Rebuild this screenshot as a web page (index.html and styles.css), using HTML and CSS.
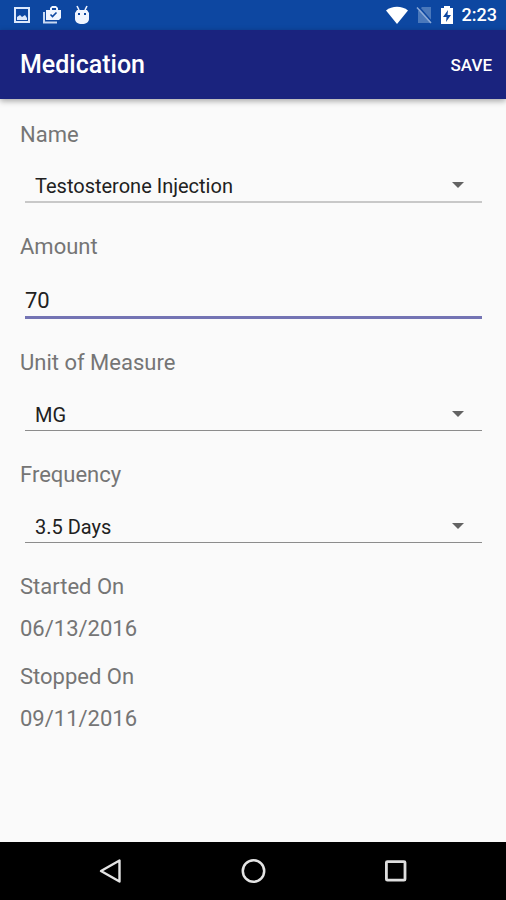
FILE: index.html
```html
<!DOCTYPE html>
<html lang="en">
<head>
<meta charset="utf-8">
<meta name="viewport" content="width=device-width, initial-scale=1">
<title>Medication</title>
<link rel="stylesheet" href="styles.css">
</head>
<body>
<div class="status">
  <div class="status-group status-left">
    <svg width="18" height="18" viewBox="0 0 18 18" aria-hidden="true"><path fill="#dce8fb" fill-rule="evenodd" d="M1 1h16v16H1zM3 3v12h12V3z"/><path fill="#dce8fb" d="M4 14v-3l3-2 2 2 3-2 2 3v2z"/></svg>
    <svg width="20" height="18" viewBox="0 0 20 18" aria-hidden="true"><path fill="none" stroke="#c7d8f2" stroke-width="2" d="M2 6v10.500h13"/><path fill="#f0f5ff" fill-rule="evenodd" d="M4 4h4V2l2-2h4l2 2v2h3v8l-2 2H4zM10 2v2h4V2z"/><path fill="none" stroke="#0d47a1" stroke-width="1.600" d="M8.500 8.500l2 2 4-4"/></svg>
    <svg width="18" height="20" viewBox="0 0 18 20" aria-hidden="true"><path fill="none" stroke="#f0f5ff" stroke-width="1.600" d="M4 1l2 4M14 1l-2 4"/><path fill="#f0f5ff" fill-rule="evenodd" d="M2 8l2-3h10l2 3v6c0 3-3 5-7 5s-7-2-7-5zM5 8v2h2V8zM11 8v2h2V8z"/></svg>
  </div>
  <div class="status-group status-right">
    <svg width="22" height="18" viewBox="0 0 22 18" aria-hidden="true"><path fill="#fff" d="M0 4.500C6-.5 16-.5 22 4.500L11 18z"/></svg>
    <svg width="16" height="18" viewBox="0 0 16 18" aria-hidden="true"><path fill="#4a78bb" d="M6 1h9v16H2V5z"/><path stroke="#0d47a1" stroke-width="1.500" d="M3 1l13 15"/><path stroke="#8eabd8" stroke-width="1.500" d="M1 1.500l14 15.500"/></svg>
    <svg width="14" height="18" viewBox="0 0 14 18" aria-hidden="true"><path fill="#fff" d="M4 0h6v2h3v16H1V2h3z"/><path fill="#0d47a1" d="M8 4l-5 7h3.500L6 16l5-7H7.500z"/></svg>
    <span class="clock">2:23</span>
  </div>
</div>
<header class="toolbar">
  <h1 class="title">Medication</h1>
  <button class="save" type="button">SAVE</button>
</header>
<main class="form">
  <div class="field">
    <label class="label" for="name">Name</label>
    <div class="control control-soft">
      <select class="select" id="name"><option>Testosterone Injection</option></select>
    </div>
  </div>
  <div class="field">
    <label class="label" for="amount">Amount</label>
    <input class="input" id="amount" type="text" inputmode="decimal" value="70">
  </div>
  <div class="field">
    <label class="label" for="unit">Unit of Measure</label>
    <div class="control">
      <select class="select" id="unit"><option>MG</option></select>
    </div>
  </div>
  <div class="field">
    <label class="label" for="frequency">Frequency</label>
    <div class="control">
      <select class="select" id="frequency"><option>3.5 Days</option></select>
    </div>
  </div>
  <dl class="dates">
    <div class="date"><dt>Started On</dt><dd>06/13/2016</dd></div>
    <div class="date"><dt>Stopped On</dt><dd>09/11/2016</dd></div>
  </dl>
</main>
<nav class="navbar">
  <button class="nav-button" type="button" aria-label="Back"><svg width="26" height="26" viewBox="0 0 26 26"><path fill="none" stroke="#e4e4e4" stroke-width="2.400" stroke-linejoin="round" d="M3 13L21.500 2.500v21z"/></svg></button>
  <button class="nav-button" type="button" aria-label="Home"><svg width="26" height="26" viewBox="0 0 26 26"><circle cx="13.500" cy="13" r="10.700" fill="none" stroke="#e4e4e4" stroke-width="2.500"/></svg></button>
  <button class="nav-button" type="button" aria-label="Recent apps"><svg width="26" height="26" viewBox="0 0 26 26"><rect x="4.400" y="3.600" width="18.600" height="18.600" rx="1" fill="none" stroke="#dedede" stroke-width="2.800"/></svg></button>
</nav>
</body>
</html>
```
FILE: styles.css
```css
* {
  box-sizing: border-box;
}

body {
  display: flex;
  flex-direction: column;
  min-height: 100vh;
  margin: 0;
  background: #fafafa;
  color: #757575;
  font-family: Roboto, sans-serif;
  font-size: 22px;
  line-height: 26px;
}

button,
input,
select {
  margin: 0;
  border: 0;
  border-radius: 0;
  outline: 0;
  background: none;
  font-family: inherit;
}

svg {
  display: block;
}

.status {
  display: flex;
  justify-content: space-between;
  align-items: center;
  height: 30px;
  padding: 0 9px 0 13px;
  background: #0d47a1;
}

.status-group {
  display: flex;
  align-items: center;
}

.status-left {
  gap: 11px;
}

.status-right {
  gap: 8px;
}

.clock {
  color: #fff;
  font-size: 18px;
  font-weight: 500;
}

.toolbar {
  display: flex;
  justify-content: space-between;
  align-items: center;
  height: 69px;
  padding: 1px 14px 0 20px;
  background: #1a237e;
  box-shadow: 0 2px 6px rgba(0, 0, 0, 0.35);
  color: #fff;
}

.title {
  margin: 0;
  font-size: 25px;
  font-weight: 500;
}

.save {
  padding: 0;
  color: #fff;
  font-size: 17px;
  font-weight: 500;
}

.form {
  display: flex;
  flex: 1;
  flex-direction: column;
  gap: 31px;
  padding: 23px 20px;
}

.field {
  display: flex;
  flex-direction: column;
}

.control {
  position: relative;
  display: flex;
  height: 55px;
  margin: 0 4px 0 5px;
  border-bottom: 1px solid #8c8c8c;
}

.control-soft {
  border-bottom: 2px solid #c8c8c8;
}

.control::after {
  content: "";
  position: absolute;
  right: 18px;
  bottom: 13px;
  border: solid transparent;
  border-width: 6px 6px 0;
  border-top-color: #636363;
  pointer-events: none;
}

.select {
  flex: 1;
  appearance: none;
  padding: 23px 40px 0 10px;
  color: #212121;
  font-size: 20px;
}

.input {
  height: 59px;
  margin: 0 4px 0 5px;
  padding: 24px 0 0;
  border-bottom: 3px solid #7474b4;
  color: #212121;
  font-size: 22px;
}

.dates {
  display: flex;
  flex-direction: column;
  gap: 22px;
  margin: 0;
}

.date {
  display: flex;
  flex-direction: column;
  gap: 16px;
}

.date dd {
  margin: 0;
}

.navbar {
  display: flex;
  justify-content: center;
  height: 58px;
  background: #000;
}

.nav-button {
  display: flex;
  justify-content: center;
  align-items: center;
  width: 28%;
  padding: 0;
}
```
